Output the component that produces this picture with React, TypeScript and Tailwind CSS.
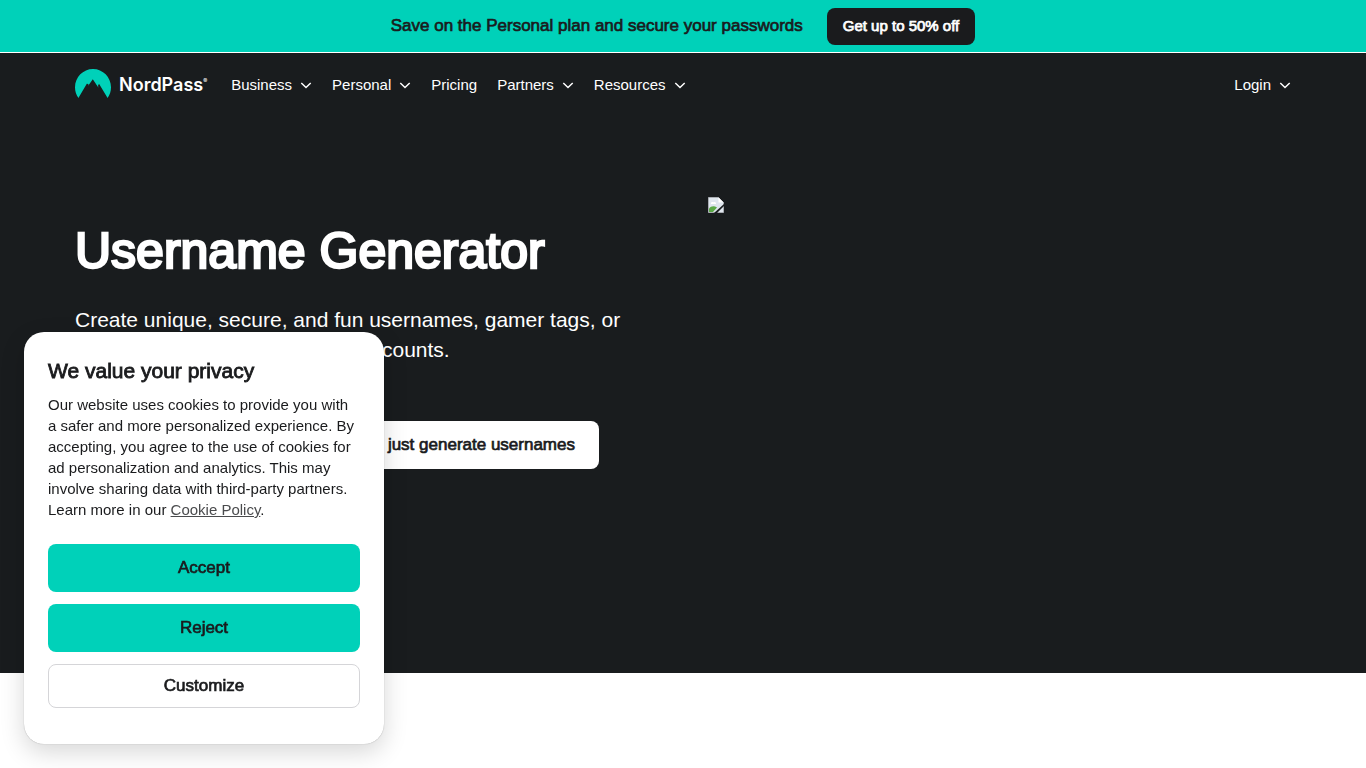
type NavItem = { label: string; menu: boolean }

const navItems: NavItem[] = [
  { label: 'Business', menu: true },
  { label: 'Personal', menu: true },
  { label: 'Pricing', menu: false },
  { label: 'Partners', menu: true },
  { label: 'Resources', menu: true },
]

function Chevron() {
  return (
    <svg width="12" height="12" viewBox="0 0 12 12" aria-hidden="true">
      <path fill="none" stroke="currentColor" strokeWidth="1.5" d="m1.300 4 4.700 4.500L10.700 4" />
    </svg>
  )
}

function Logo() {
  return (
    <a href="#" aria-label="NordPass home" className="flex items-center gap-2 text-white">
      <svg width="36" height="32" viewBox="0 0 36 32" aria-hidden="true">
        <path
          fill="#00d1b9"
          d="M3.400 29C1.200 26 0 22.300 0 18.300 0 8.200 8.100 0 18 0s18 8.200 18 18.300c0 4-1.200 7.700-3.400 10.700L24 14.700l-1 2.100.5 2L17.800 10.300 13.200 16.800l.3-1.900-1.700-.1Z"
        />
      </svg>
      <span className="flex font-['Inter'] text-[18px] leading-6 font-semibold">
        NordPass
        <span className="text-[6px] leading-4">®</span>
      </span>
    </a>
  )
}

function PromoBar() {
  return (
    <div className="flex min-h-[53px] items-center justify-center gap-6 border-b border-white bg-[#00d1b9]">
      <p className="text-[17px] leading-6 [-webkit-text-stroke:0.04em]">
        Save on the Personal plan and secure your passwords
      </p>
      <button className="h-[37px] rounded-lg bg-[#1a1b1d] px-4 text-[15px] text-white [-webkit-text-stroke:0.05em]">
        Get up to 50% off
      </button>
    </div>
  )
}

function Header() {
  return (
    <header className="mx-auto flex h-16 max-w-[1216px] items-center text-[15px] leading-6 text-white">
      <Logo />
      <nav className="ml-6 flex items-center gap-5">
        {navItems.map((item) =>
          item.menu ? (
            <button key={item.label} className="flex items-center gap-2">
              {item.label}
              <Chevron />
            </button>
          ) : (
            <a key={item.label} href="#">
              {item.label}
            </a>
          ),
        )}
      </nav>
      <button className="ml-auto flex items-center gap-2">
        Login
        <Chevron />
      </button>
    </header>
  )
}

// Placeholder the browser shows for a picture that failed to load
function MissingImage() {
  return (
    <svg width="16" height="16" viewBox="0 0 16 16" role="img" aria-label="Missing picture">
      <path fill="#dfe6ee" stroke="#a9adb3" d="M.5.5h10l5 5v10H.5Z" />
      <path fill="#fff" d="M10.500.500v5h5Z" />
      <path fill="#fff" d="M3 6.500a1.500 1.500 0 0 1 2.500-1.200 1.600 1.600 0 0 1 2.500 1.700H3Z" />
      <path fill="#5aa846" d="M1 15v-3.500c2-2.500 5-3 8-1L5 15Z" />
      <path fill="#191c1e" d="M16 7v2l-7 7H6Z" />
    </svg>
  )
}

function Hero() {
  return (
    <section className="mx-auto grid max-w-[1216px] grid-cols-2 gap-[50px] pt-20">
      <div className="pt-6">
        <h1 className="text-[50px] leading-[60px] whitespace-nowrap [-webkit-text-stroke:0.05em]">
          Username Generator
        </h1>
        <p className="mt-6 text-[21px] leading-[30px]">
          Create unique, secure, and fun usernames, gamer tags, or aliases for your favorite online accounts.
        </p>
        <div className="mt-14 flex max-w-[524px] justify-end text-[17px] text-[#1a1b1d] [-webkit-text-stroke:0.04em]">
          <button className="h-12 rounded-lg bg-white px-6">No, just generate usernames</button>
        </div>
      </div>
      <div>
        <MissingImage />
      </div>
    </section>
  )
}

function CookieBanner() {
  return (
    <div
      role="dialog"
      aria-labelledby="cookie-title"
      className="fixed bottom-6 left-6 w-[360px] rounded-[20px] bg-white px-6 pt-6 pb-9 shadow-[0_0_1px_rgba(0,0,0,0.4),0_8px_24px_rgba(0,0,0,0.16)]"
    >
      <h2 id="cookie-title" className="text-[21px] leading-[30px] [-webkit-text-stroke:0.04em]">
        We value your privacy
      </h2>
      <p className="mt-2 text-[15px] leading-[21px]">
        Our website uses cookies to provide you with a safer and more personalized experience. By accepting, you agree
        to the use of cookies for ad personalization and analytics. This may involve sharing data with third-party
        partners. Learn more in our{' '}
        <a href="#" className="text-[#4a4b4d] underline">
          Cookie Policy
        </a>
        .
      </p>
      <div className="mt-6 flex flex-col gap-3 text-[17px] [-webkit-text-stroke:0.04em]">
        <button className="h-12 rounded-lg bg-[#00d1b9]">Accept</button>
        <button className="h-12 rounded-lg bg-[#00d1b9]">Reject</button>
        <button className="h-11 rounded-lg border border-[#d5d5d8] bg-white">Customize</button>
      </div>
    </div>
  )
}

export default function App() {
  return (
    <div className="min-h-screen bg-white font-['Liberation_Sans',Arial,sans-serif] text-[#1a1b1d]">
      <PromoBar />
      <main className="bg-[#191c1e] pb-[204px] text-white">
        <Header />
        <Hero />
      </main>
      <CookieBanner />
    </div>
  )
}
